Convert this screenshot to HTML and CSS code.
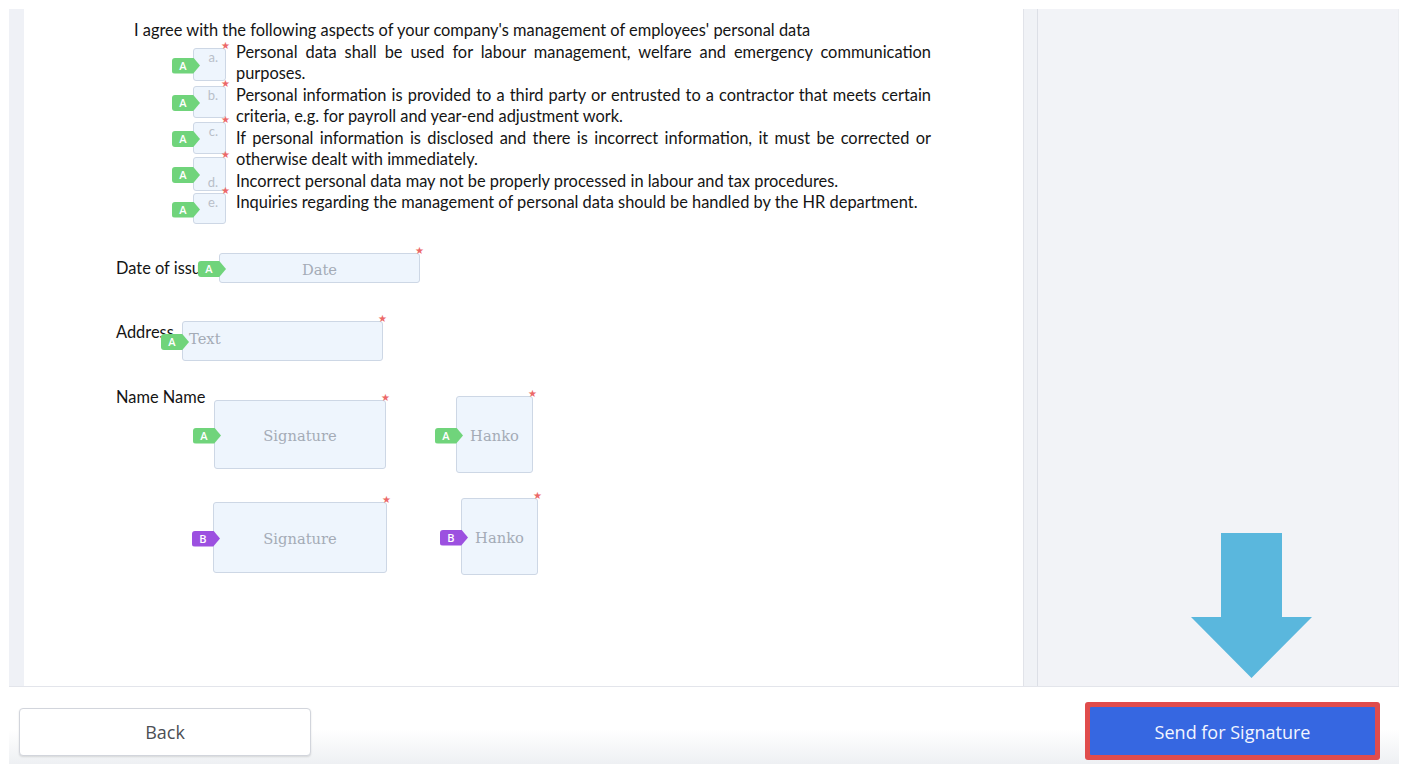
FILE: index.html
```html
<!DOCTYPE html>
<html lang="en">
<head>
<meta charset="utf-8">
<title>Send for Signature</title>
<link rel="stylesheet" href="styles.css">
</head>
<body>
<div class="app">
  <div class="workspace">
    <div class="gutter"></div>
    <div class="doc">
      <p class="intro">I agree with the following aspects of your company's management of employees' personal data</p>
      <div class="items">
        <p>Personal data shall be used for labour management, welfare and emergency communication purposes.</p>
        <p>Personal information is provided to a third party or entrusted to a contractor that meets certain criteria, e.g. for payroll and year-end adjustment work.</p>
        <p>If personal information is disclosed and there is incorrect information, it must be corrected or otherwise dealt with immediately.</p>
        <p>Incorrect personal data may not be properly processed in labour and tax procedures.</p>
        <p>Inquiries regarding the management of personal data should be handled by the HR department.</p>
      </div>
      <p class="label label-date">Date of issue</p>
      <p class="label">Address</p>
      <p class="label">Name Name</p>

      <div class="fld chk chk-a"><span class="mark">a.</span><span class="tag">A</span><span class="star">★</span></div>
      <div class="fld chk chk-b"><span class="mark">b.</span><span class="tag">A</span><span class="star">★</span></div>
      <div class="fld chk chk-c"><span class="mark">c.</span><span class="tag">A</span><span class="star">★</span></div>
      <div class="fld chk chk-d"><span class="mark mark-low">d.</span><span class="tag">A</span><span class="star">★</span></div>
      <div class="fld chk chk-e"><span class="mark">e.</span><span class="tag">A</span><span class="star">★</span></div>

      <div class="fld date"><span class="ph ph-low">Date</span><span class="tag">A</span><span class="star">★</span></div>
      <div class="fld addr"><span class="ph ph-left">Text</span><span class="tag">A</span><span class="star">★</span></div>
      <div class="fld sig-a"><span class="ph">Signature</span><span class="tag">A</span><span class="star">★</span></div>
      <div class="fld hanko-a"><span class="ph">Hanko</span><span class="tag">A</span><span class="star">★</span></div>
      <div class="fld sig-b"><span class="ph">Signature</span><span class="tag tag-b">B</span><span class="star">★</span></div>
      <div class="fld hanko-b"><span class="ph">Hanko</span><span class="tag tag-b">B</span><span class="star">★</span></div>
    </div>
    <div class="gap"></div>
    <div class="side">
      <svg class="arrow" width="121" height="145" viewBox="0 0 121 145" aria-hidden="true">
        <path d="M30 0 H91 V84 H121 L60.5 145 L0 84 H30 Z" fill="#5ab7dd"/>
      </svg>
    </div>
  </div>
  <div class="footer">
    <button class="btn btn-back">Back</button>
    <div class="send-outline"><button class="btn btn-send">Send for Signature</button></div>
  </div>
</div>
</body>
</html>
```
FILE: styles.css
```css
html, body {
  margin: 0;
  padding: 0;
  background: #ffffff;
}
body {
  font-family: "Lato", "Open Sans", sans-serif;
  color: #141414;
}
.app {
  width: 1390px;
  margin-left: 9px;
  padding-top: 9px;
}
.workspace {
  display: flex;
  height: 677px;
  border-bottom: 1px solid #e3e5eb;
}
.gutter {
  width: 15px;
  background: #eff1f6;
}
.doc {
  position: relative;
  width: 1000px;
  background: #ffffff;
  border-right: 1px solid #e1e3e9;
  padding-top: 10px;
  box-sizing: border-box;
  font-size: 16.4px;
  line-height: 21.5px;
}
.doc p {
  margin: 0;
}
.intro {
  margin-left: 110px !important;
}
.items {
  margin-left: 212px;
  width: 695px;
}
.items p {
  text-align: justify;
  text-align-last: left;
}
.label {
  margin-left: 92px !important;
  margin-top: 43px !important;
}
.label-date {
  margin-top: 44px !important;
}
.gap {
  width: 13px;
  background: #f0f2f6;
  border-right: 1px solid #dcdfe6;
}
.side {
  flex: 1;
  background: #f2f3f7;
  display: flex;
  align-items: flex-end;
  padding-left: 153px;
  padding-bottom: 8px;
  box-shadow: inset -1px 0 0 #eceef2;
}
.arrow {
  display: block;
}

/* overlay fields */
.fld {
  position: absolute;
  box-sizing: border-box;
  background: #eef5fd;
  border: 1px solid #cdd7e5;
  border-radius: 3px;
  display: flex;
  align-items: center;
  justify-content: center;
}
.chk { left: 169px; width: 33px; }
.chk-a { top: 39px; height: 33px; }
.chk-b { top: 77px; height: 32px; }
.chk-c { top: 113px; height: 32px; }
.chk-d { top: 148px; height: 34px; }
.chk-e { top: 184px; height: 31px; }
.mark {
  position: absolute;
  right: 7px;
  top: 0;
  font-size: 13px;
  line-height: 16px;
  color: #b9bfc9;
}
.mark-low { top: auto; bottom: 0; }
.date { left: 195px; top: 244px; width: 201px; height: 30px; }
.addr { left: 158px; top: 312px; width: 201px; height: 40px; align-items: flex-start; justify-content: flex-start; }
.sig-a { left: 190px; top: 391px; width: 172px; height: 69px; }
.hanko-a { left: 432px; top: 387px; width: 77px; height: 77px; }
.sig-b { left: 189px; top: 493px; width: 174px; height: 71px; }
.hanko-b { left: 437px; top: 489px; width: 77px; height: 77px; }

.ph {
  font-family: "DejaVu Serif", "Liberation Serif", serif;
  font-size: 14.7px;
  color: #a4abb6;
  padding-top: 2px;
}
.ph-low {
  padding-top: 3px;
}
.ph-left {
  margin: 4px 0 0 6px;
}
.tag {
  position: absolute;
  left: -22px;
  top: 50%;
  margin-top: -7px;
  width: 28px;
  height: 16px;
  box-sizing: border-box;
  padding-right: 6px;
  background: #70d47b;
  color: #ffffff;
  border-radius: 3px;
  clip-path: polygon(0 0, 76% 0, 100% 50%, 76% 100%, 0 100%);
  font-family: "Open Sans", sans-serif;
  font-size: 11px;
  font-weight: 600;
  line-height: 16px;
  text-align: center;
}
.tag-b {
  background: #9c50e0;
}
.star {
  position: absolute;
  left: 100%;
  top: -3px;
  transform: translate(-45%, -50%);
  font-family: "DejaVu Sans", sans-serif;
  font-size: 10px;
  line-height: 10px;
  color: #ec6868;
}

/* footer */
.footer {
  height: 77px;
  display: flex;
  justify-content: space-between;
  align-items: flex-start;
  background: linear-gradient(to bottom, #ffffff 0%, #ffffff 55%, #eef0f3 100%);
}
.btn {
  font-family: "Open Sans", sans-serif;
  font-size: 18px;
  border-radius: 4px;
  cursor: pointer;
}
.btn-back {
  margin: 21px 0 0 10px;
  width: 292px;
  height: 48px;
  background: #ffffff;
  color: #4c4f55;
  border: 1px solid #d2d5dc;
  box-shadow: 0 1px 2px rgba(0, 0, 0, 0.12);
}
.send-outline {
  margin: 15px 19px 0 0;
  padding: 5px;
  background: #e04c4c;
  border-radius: 3px;
}
.btn-send {
  display: block;
  width: 285px;
  height: 48px;
  padding-top: 2px;
  background: #3667e1;
  color: #f2f5ff;
  border: none;
  border-radius: 1px;
}
```
